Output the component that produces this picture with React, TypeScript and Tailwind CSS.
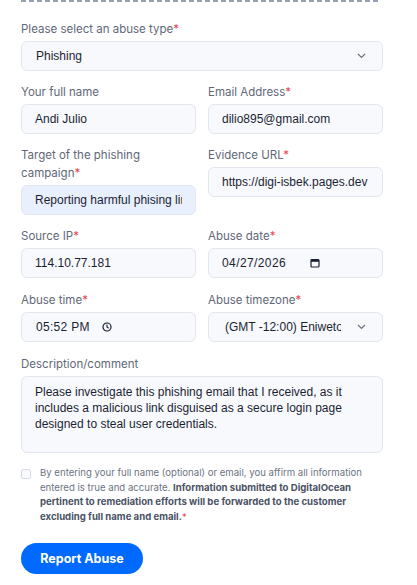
import React from "react";

const Star = () => <span className="text-[#e8484f]">*</span>;

function Label({ children, req }: { children: React.ReactNode; req?: boolean }) {
  return (
    <div className="text-[11.5px] leading-[18px] text-[#5f6879] font-['Inter',sans-serif] mb-[3px]">
      {children}
      {req && <Star />}
    </div>
  );
}

const box =
  "h-[30px] w-full rounded-[6px] border border-[#e3e6ee] bg-[#f7f9fc] px-[13px] text-[12px] text-[#1b1f33] font-['Liberation_Sans',Arial,sans-serif] outline-none";

function Chevron() {
  return (
    <svg width="9" height="6" viewBox="0 0 9 6" className="shrink-0">
      <path d="M1 1l3.5 3.5L8 1" fill="none" stroke="#6b7280" strokeWidth="1.2" />
    </svg>
  );
}

export default function App() {
  return (
    <div className="w-[417px] h-[585px] bg-white pl-[21px] pr-[34px] overflow-hidden">
      <div className="h-[2px] w-[359px] bg-[repeating-linear-gradient(to_right,#97a1b6_0_5px,transparent_5px_8px)]" />
      <div className="mt-[18px] flex flex-col">
        <div>
          <Label req>Please select an abuse type</Label>
          <div className={box + " flex items-center justify-between pr-[16px]"}>
            <span className="pl-[1px]">Phishing</span>
            <Chevron />
          </div>
        </div>

        <div className="mt-[12px] grid grid-cols-2 gap-x-[12px]">
          <div>
            <Label>Your full name</Label>
            <input readOnly defaultValue="Andi Julio" className={box} />
          </div>
          <div>
            <Label req>Email Address</Label>
            <input readOnly defaultValue="dilio895@gmail.com" className={box} />
          </div>
        </div>

        <div className="mt-[12px] grid grid-cols-2 gap-x-[12px] items-start">
          <div>
            <Label req>
              Target of the phishing
              <br />
              campaign
            </Label>
            <input
              readOnly
              defaultValue="Reporting harmful phising link"
              className={box.replace("bg-[#f7f9fc]", "bg-[#e8f0fe]")}
            />
          </div>
          <div>
            <Label req>Evidence URL</Label>
            <input readOnly defaultValue="https://digi-isbek.pages.dev" className={box} />
          </div>
        </div>

        <div className="mt-[12px] grid grid-cols-2 gap-x-[12px]">
          <div>
            <Label req>Source IP</Label>
            <input readOnly defaultValue="114.10.77.181" className={box} />
          </div>
          <div>
            <Label req>Abuse date</Label>
            <div className={box + " flex items-center"}>
              <span className="tracking-[0.4px]">04/27/2026</span>
              <svg width="10" height="10" viewBox="0 0 10 10" className="ml-[24px]">
                <rect x="1" y="1.5" width="8" height="7.5" rx="1" fill="none" stroke="#1b1f33" strokeWidth="1.2" />
                <rect x="1" y="1.5" width="8" height="2.3" fill="#1b1f33" />
              </svg>
            </div>
          </div>
        </div>

        <div className="mt-[13px] grid grid-cols-2 gap-x-[12px]">
          <div>
            <Label req>Abuse time</Label>
            <div className={box + " flex items-center"}>
              <span className="pl-[1px] tracking-[0.3px]">05:52 PM</span>
              <svg width="10" height="10" viewBox="0 0 10 10" className="ml-[12px]">
                <circle cx="5" cy="5" r="4" fill="none" stroke="#1b1f33" strokeWidth="1.2" />
                <path d="M5 2.6V5l1.6 1.3" fill="none" stroke="#1b1f33" strokeWidth="1.1" />
              </svg>
            </div>
          </div>
          <div>
            <Label req>Abuse timezone</Label>
            <div className={box + " flex items-center justify-between pr-[16px]"}>
              <span className="w-[119px] overflow-hidden whitespace-nowrap pl-[3px]">
                (GMT -12:00) Eniwetok, Kwajalein
              </span>
              <Chevron />
            </div>
          </div>
        </div>

        <div className="mt-[13px]">
          <Label>Description/comment</Label>
          <div className="h-[77px] w-full rounded-[6px] border border-[#e3e6ee] bg-[#f7f9fc] px-[13px] pt-[7px] text-[12px] leading-[16px] text-[#1b1f33] font-['Liberation_Sans',Arial,sans-serif]">
            Please investigate this phishing email that I received, as it
            <br />
            includes a malicious link disguised as a secure login page
            <br />
            designed to steal user credentials.
          </div>
        </div>
      </div>

      <div className="mt-[13px] flex items-start gap-[9px]">
        <div className="mt-[3px] h-[10px] w-[10px] shrink-0 rounded-[2px] border border-[#d6dae4] bg-[#f7f9fc]" />
        <div className="text-[9.6px] leading-[14.6px] text-[#6b7382] font-['Inter',sans-serif] whitespace-nowrap">
          By entering your full name (optional) or email, you affirm all information
          <br />
          entered is true and accurate.{" "}
          <b className="font-bold text-[#4a5264]">
            Information submitted to DigitalOcean
            <br />
            pertinent to remediation efforts will be forwarded to the customer
            <br />
            excluding full name and email.
          </b>
          <Star />
        </div>
      </div>

      <button className="mt-[19px] h-[31px] w-[122px] rounded-full bg-[#0069ff] text-white text-[12.5px] font-bold font-['Inter',sans-serif]">
        Report Abuse
      </button>
    </div>
  );
}
